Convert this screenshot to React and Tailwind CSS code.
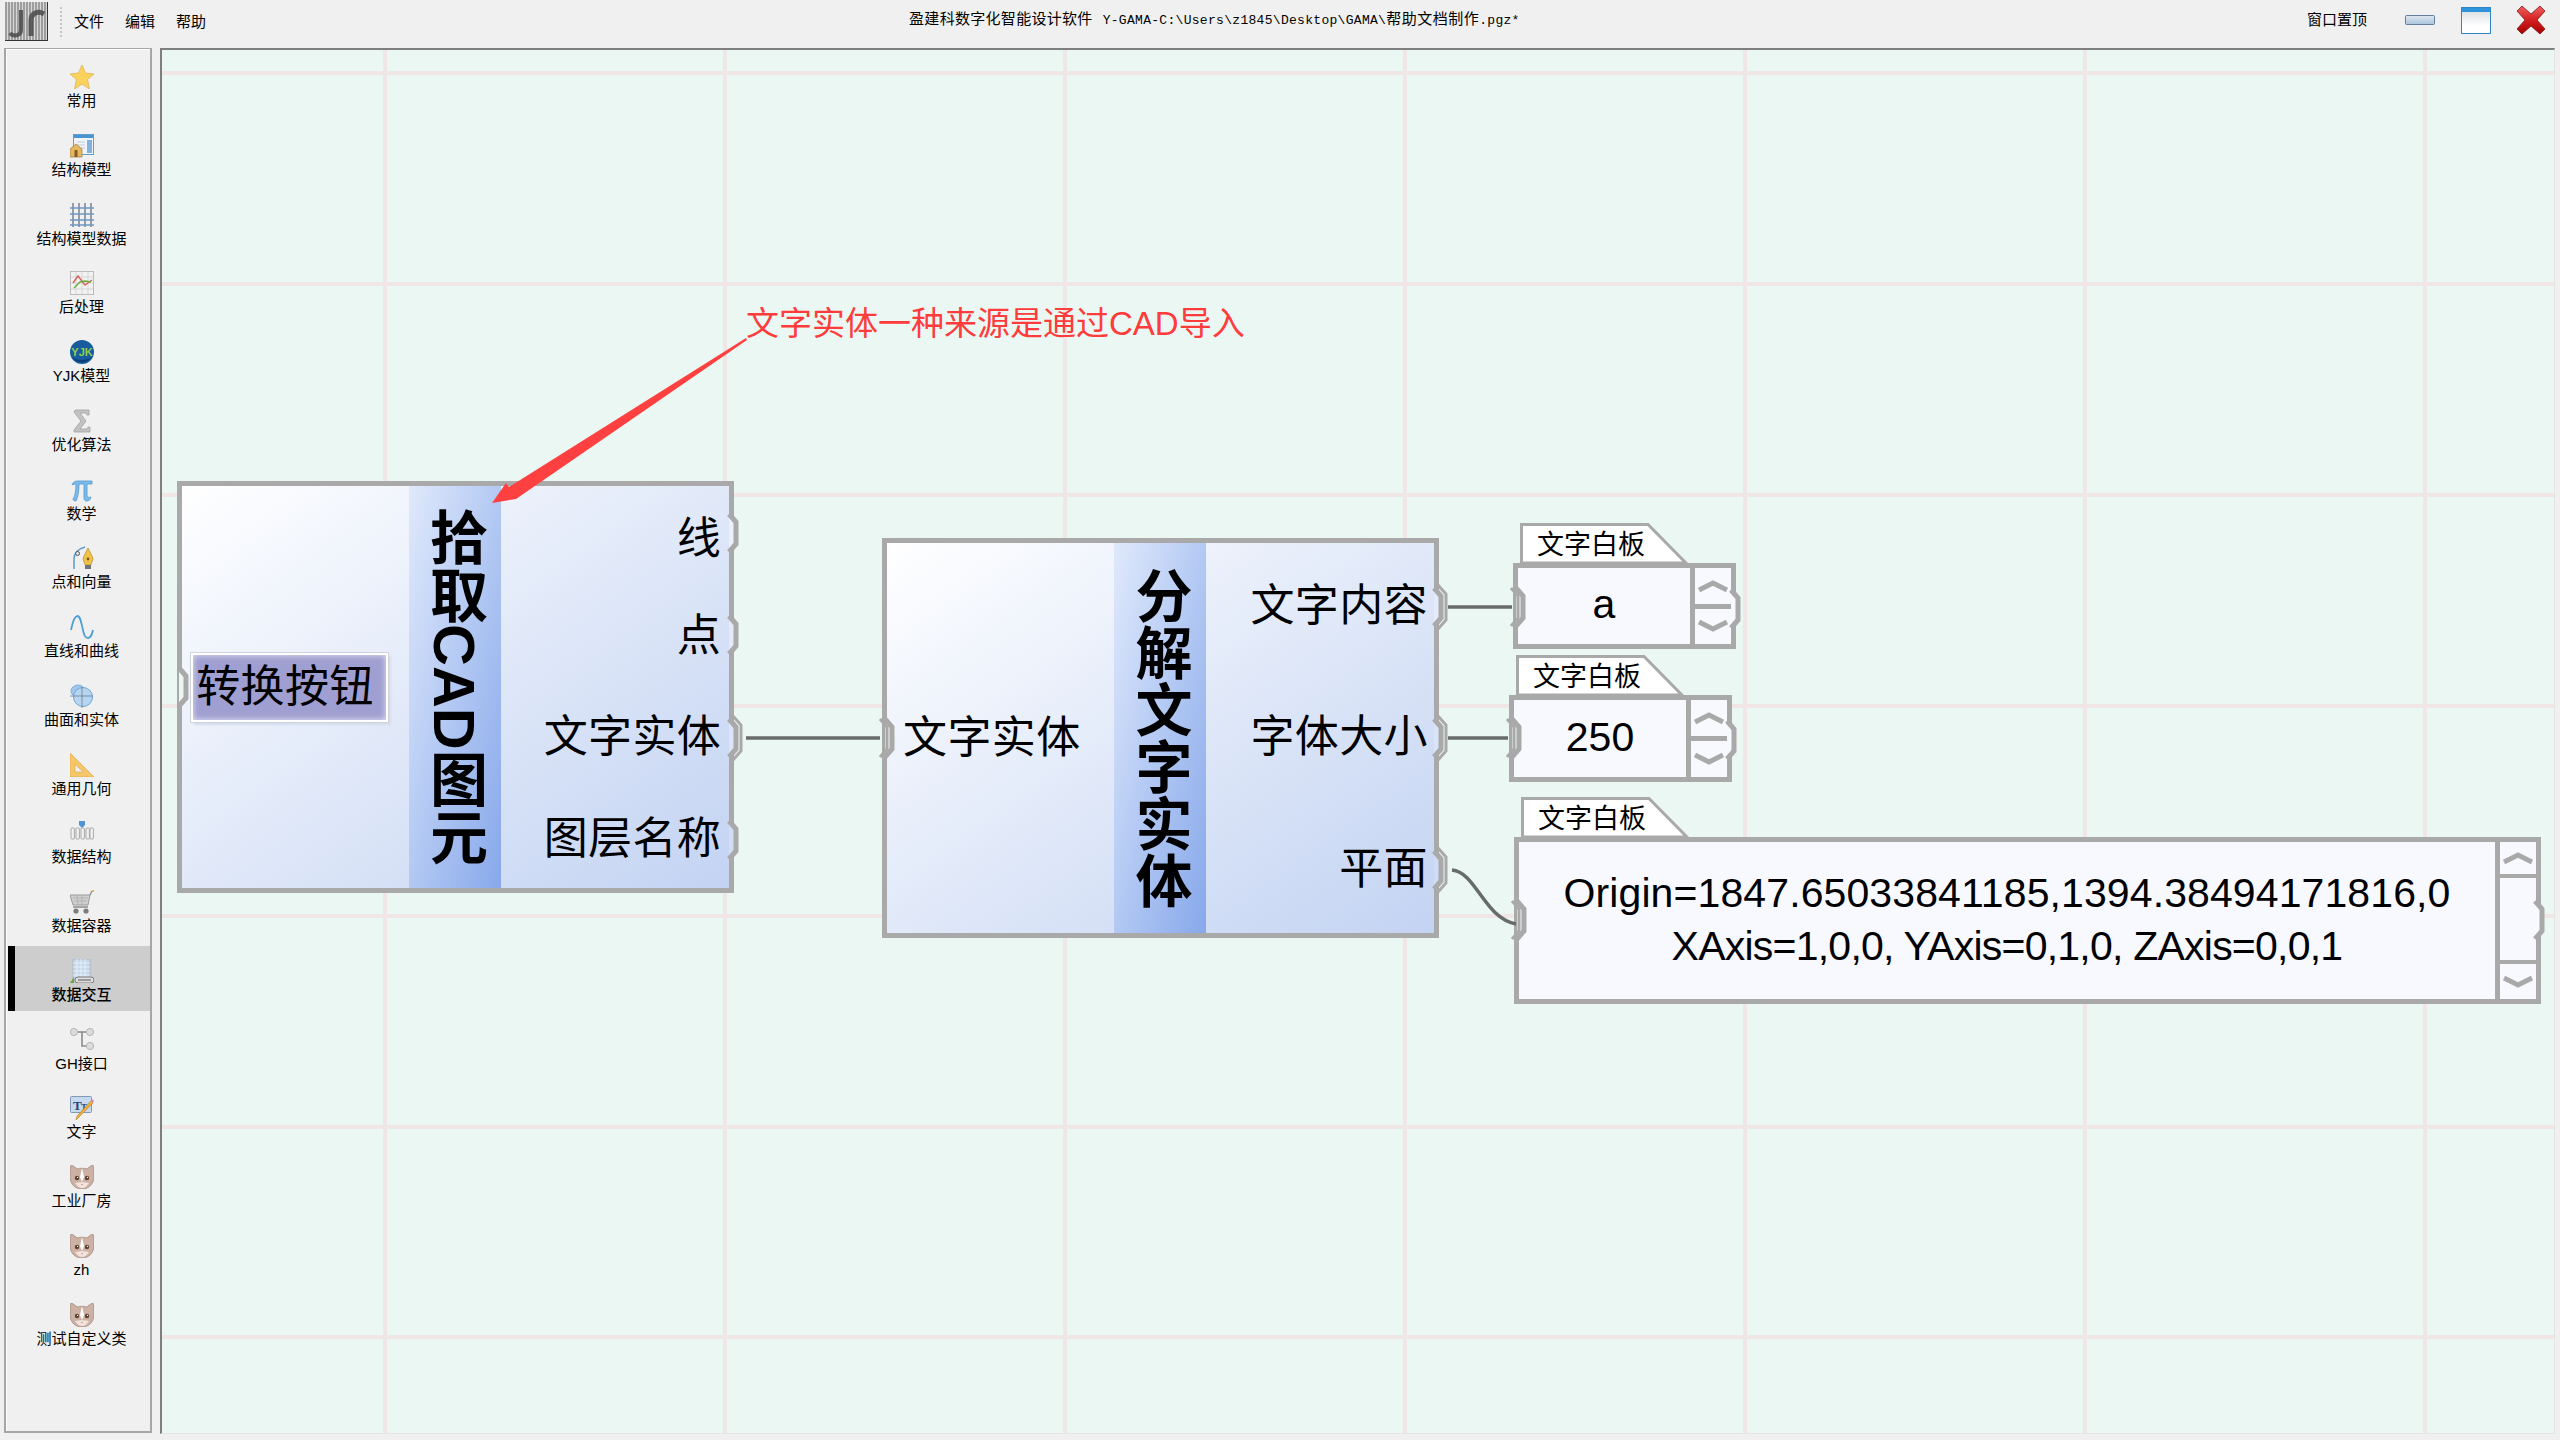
import React from "react";

const BORDER = "#a9a9a9";
const GRID_X = [385, 725, 1065, 1405, 1745, 2085, 2425];
const GRID_Y = [73, 284, 495, 706, 916, 1127, 1337];

const Star = () => (
  <polygon points="12,0 15.5,8 24,9 17.5,14.5 19.5,24 12,19 4.5,24 6.5,14.5 0,9 8.5,8" fill="#fbd25c" stroke="#e6bd63" strokeWidth="1" />
);

const ModelIcon = () => (
  <>
    <rect x="3.5" y="0.5" width="20" height="20" fill="#eef4fa" stroke="#5d9fd0" />
    <rect x="4" y="1" width="19" height="3" fill="#4a94cf" />
    <rect x="17" y="6" width="5" height="13" fill="#7fb2dc" />
    <path d="M7 8h8M7 11h8M7 14h8" stroke="#c5cbd2" />
    <path d="M0 15l6-5 6 5v8H0z" fill="#e5b75f" stroke="#9a7a48" strokeWidth="0.7" />
    <rect x="4.5" y="16" width="3" height="7" fill="#8a5a24" />
  </>
);

const GridIcon = () => (
  <>
    <path d="M3 0v24M9 0v24M15 0v24M21 0v24" stroke="#6f7a85" strokeWidth="1.4" />
    <path d="M0 5h24M0 11h24M0 17h24M0 22h24" stroke="#6f97c4" strokeWidth="1.6" />
  </>
);

const ChartIcon = () => (
  <>
    <rect x="0.5" y="0.5" width="23" height="23" fill="#f2f2f2" stroke="#bdbdbd" />
    <path d="M6 1v22M12 1v22M18 1v22M1 6h22M1 12h22M1 18h22" stroke="#d6d6d6" />
    <path d="M3 12L8 5l7 9 7-5" fill="none" stroke="#d9625a" strokeWidth="1.4" />
    <path d="M4 17l6-6 5-1 6 1" fill="none" stroke="#6cab3e" strokeWidth="1.4" />
  </>
);

const YjkIcon = () => (
  <>
    <circle cx="12" cy="12" r="12" fill="#175c9e" />
    <path d="M2 17a14 10 0 0 0 20 0 12 12 0 0 1-20 0z" fill="#0c3f78" />
    <text x="12" y="15.5" textAnchor="middle" fontSize="11" fontWeight="700" fill="#8fd04a" fontFamily="Liberation Sans">YJK</text>
  </>
);

const SigmaIcon = () => (
  <path d="M5 1h14v5h-2l-1-2H10l6 8-6 8h7l1-2h2v5H4v-2l7-9-7-9z" fill="#c2c2c2" stroke="#a2a2a2" strokeWidth="0.8" />
);

const PiIcon = () => (
  <path d="M2 7c1-3 3-4 6-4h14v3h-5v11c0 2 1 3 4 2-1 3-2 4-4 4-3 0-3-2-3-5V6H9c0 7-1 13-3 17-2 0-3-1-3-2 2-3 3-8 3-15-1 0-3 0-4 1z" fill="#7dbcea" stroke="#4f97cf" strokeWidth="0.8" />
);

const PenIcon = () => (
  <>
    <path d="M4 23V13C4 7 8 3 15 1" fill="none" stroke="#5d9ac8" strokeWidth="1.5" />
    <circle cx="7.5" cy="7.5" r="2" fill="#d8e4ef" stroke="#555" />
    <path d="M18 2l5 10c0 3-2 5-2 7h-6c0-2-2-4-2-7z" fill="#f1c24a" stroke="#b58a2b" strokeWidth="0.7" />
    <circle cx="18" cy="13" r="1.4" fill="#7a5a18" />
    <rect x="15" y="19" width="6" height="4" fill="#70757a" />
  </>
);

const SineIcon = () => (
  <path d="M1 15C3 5 5 1 7.5 1S11 6 12.5 13 15 23 18 23s4-4 5-8" fill="none" stroke="#4f9fd6" strokeWidth="1.8" />
);

const SolidIcon = () => (
  <>
    <ellipse cx="8" cy="7" rx="7" ry="6" fill="#9fc8ec" stroke="#7aaedb" />
    <circle cx="13" cy="13" r="9.5" fill="#b6d5f1" stroke="#6ea6d6" />
    <path d="M0 12h23M12 3v21" stroke="#6d7f8f" strokeWidth="0.8" />
  </>
);

const RulerIcon = () => (
  <path fillRule="evenodd" d="M0 0l24 24H0zM5 11v8h8z" fill="#f5c76a" stroke="#dca948" strokeWidth="0.7" />
);

const StructIcon = () => (
  <>
    <path d="M9 0h6v4l-3 3-3-3z" fill="#4f94d8" />
    {[1, 6, 11, 16, 20].map((x) => (
      <rect key={x} x={x} y="7" width="3.4" height="11" rx="1" fill="#f2f2f2" stroke="#a8a8a8" />
    ))}
  </>
);

const CartIcon = () => (
  <>
    <path d="M0 5h20l-2 10H3z" fill="#cfcfcf" stroke="#9a9a9a" />
    <path d="M3 8h15M4 11h13M7 5l1 10M12 5v10" stroke="#a9a9a9" strokeWidth="0.7" />
    <path d="M20 5l2-4M3 17h15" stroke="#8a8a8a" strokeWidth="1.3" />
    <circle cx="23" cy="1" r="1" fill="#e2a13c" />
    <circle cx="6" cy="21" r="2.6" fill="#7d7d7d" />
    <circle cx="16" cy="21" r="2.6" fill="#7d7d7d" />
  </>
);

const BuildingIcon = () => (
  <>
    <rect x="3" y="0" width="17" height="20" fill="#c6d8ea" stroke="#a1b4c6" strokeWidth="0.8" />
    <path d="M7 0v20M11 0v20M15 0v20M3 4h17M3 8h17M3 12h17M3 16h17" stroke="#eef4fa" strokeWidth="0.8" />
    <path d="M0 24l4-6v6z" fill="#6aa53a" />
    <rect x="5" y="18" width="19" height="6" rx="3" fill="#dedede" stroke="#7c7c7c" />
    <path d="M8 21h13" stroke="#555" />
  </>
);

const TreeIcon = () => (
  <>
    <path d="M4 4h16M12 4v14h8" fill="none" stroke="#8a8a8a" strokeWidth="1.6" />
    <circle cx="4" cy="4" r="3.6" fill="#dcdcdc" stroke="#b5b5b5" />
    <circle cx="20" cy="4" r="3.6" fill="#dcdcdc" stroke="#b5b5b5" />
    <circle cx="20" cy="18" r="3.6" fill="#dcdcdc" stroke="#b5b5b5" />
  </>
);

const TextIcon = () => (
  <>
    <rect x="0.5" y="0.5" width="21" height="16" rx="1" fill="#c7d9ee" stroke="#7f99b8" />
    <text x="3" y="14" fontSize="13" fontWeight="700" fill="#25466e" fontFamily="Liberation Serif">T</text>
    <text x="11" y="14" fontSize="9" fontWeight="700" fill="#25466e" fontFamily="Liberation Serif">T</text>
    <path d="M23 7l-15 15-2 2 1-4L21 5z" fill="#f2ae3d" stroke="#b47d25" strokeWidth="0.6" />
    <path d="M21 5l2 2 1-2-1-2z" fill="#dd8fc0" />
  </>
);

const CatIcon = () => (
  <>
    <path d="M1 0c3 1 5 3 6 4 3-1 7-1 10 0 1-1 3-3 6-4 1 4 1 8 1 11 0 8-5 13-12 13S0 19 0 11C0 8 0 4 1 0z" fill="#cdb1a4" stroke="#9a8278" strokeWidth="0.7" />
    <path d="M12 3l2 9-2 5-2-5z" fill="#fff" />
    <path d="M5 18c2 3 4 5 7 5s5-2 7-5c-4-1-10-1-14 0z" fill="#f1e3dc" />
    <circle cx="7" cy="13" r="2.2" fill="#5a4030" />
    <circle cx="17" cy="13" r="2.2" fill="#5a4030" />
    <circle cx="7.5" cy="12.4" r="0.7" fill="#fff" />
    <circle cx="17.5" cy="12.4" r="0.7" fill="#fff" />
    <path d="M11 19h2l-1 1z" fill="#a56f60" />
  </>
);

const toolItems = [
  { name: "常用", icon: Star },
  { name: "结构模型", icon: ModelIcon },
  { name: "结构模型数据", icon: GridIcon },
  { name: "后处理", icon: ChartIcon },
  { name: "YJK模型", icon: YjkIcon },
  { name: "优化算法", icon: SigmaIcon },
  { name: "数学", icon: PiIcon },
  { name: "点和向量", icon: PenIcon },
  { name: "直线和曲线", icon: SineIcon },
  { name: "曲面和实体", icon: SolidIcon },
  { name: "通用几何", icon: RulerIcon },
  { name: "数据结构", icon: StructIcon },
  { name: "数据容器", icon: CartIcon },
  { name: "数据交互", icon: BuildingIcon, active: true },
  { name: "GH接口", icon: TreeIcon },
  { name: "文字", icon: TextIcon },
  { name: "工业厂房", icon: CatIcon },
  { name: "zh", icon: CatIcon },
  { name: "测试自定义类", icon: CatIcon },
];

const Logo = () => (
  <svg width="43" height="39" viewBox="0 0 43 39">
    <rect width="43" height="39" fill="#d8d8d8" />
    {[1, 4, 7, 10, 13, 16, 19, 22, 25, 28, 31, 34, 37, 40].map((x) => (
      <path key={x} d="M0 0v38" transform={`translate(${x} 0)`} stroke="#777" strokeWidth="1.2" />
    ))}
    <path d="M16 8v20c0 6-8 7-11 3" fill="none" stroke="#4a4a4a" strokeWidth="4" opacity="0.85" />
    <path d="M26 34V18c0-6 6-10 13-6" fill="none" stroke="#4a4a4a" strokeWidth="5" opacity="0.85" />
    <path d="M0 38.5h43M42.5 0v39" stroke="#333" />
  </svg>
);

const TitleBar = () => (
  <header className="h-12 flex items-center relative">
    <div className="ml-[5px] mb-[5px]"><Logo /></div>
    <div className="ml-[12px] mb-[5px] h-[30px] border-l-2 border-dotted border-[#c4c4c4]" />
    <nav className="ml-[12px] flex gap-[21px] text-[15px] text-black mb-[3px]">
      <span>文件</span>
      <span>编辑</span>
      <span>帮助</span>
    </nav>
    <div className="ml-[703px] mb-[10px] text-[15px] text-black whitespace-nowrap flex items-baseline">
      <span className="tracking-[0.3px]">盈建科数字化智能设计软件</span>
      <span className="ml-[10px] text-[13px] tracking-[0.3px] [font-family:'Liberation_Mono',monospace]">Y-GAMA-C:\Users\z1845\Desktop\GAMA\</span>
      <span className="tracking-[0.5px]">帮助文档制作</span>
      <span className="text-[13px] tracking-[0.3px] [font-family:'Liberation_Mono',monospace]">.pgz*</span>
    </div>
    <div className="ml-auto flex items-center mb-[8px]">
      <span className="text-[15px] text-black">窗口置顶</span>
      <svg className="ml-[38px]" width="30" height="10" viewBox="0 0 30 10">
        <defs>
          <linearGradient id="minFill" x1="0" y1="0" x2="0" y2="1">
            <stop offset="0" stopColor="#dfe8f2" />
            <stop offset="1" stopColor="#a9c3dc" />
          </linearGradient>
        </defs>
        <rect x="0.5" y="0.5" width="29" height="9" rx="1" fill="url(#minFill)" stroke="#5f7f9f" />
      </svg>
      <svg className="ml-[26px]" width="30" height="27" viewBox="0 0 30 27">
        <defs>
          <linearGradient id="maxFill" x1="0" y1="0" x2="0" y2="1">
            <stop offset="0" stopColor="#d5d9dc" />
            <stop offset="0.7" stopColor="#ffffff" />
          </linearGradient>
        </defs>
        <rect x="0.5" y="0.5" width="29" height="26" fill="url(#maxFill)" stroke="#2f86c5" />
        <rect x="1" y="1" width="28" height="4" fill="#2f94dc" />
      </svg>
      <svg className="ml-[25px] mr-[14px]" width="30" height="30" viewBox="0 0 30 30">
        <defs>
          <linearGradient id="closeFill" x1="0" y1="0" x2="0" y2="1">
            <stop offset="0" stopColor="#f06060" />
            <stop offset="0.5" stopColor="#d42020" />
            <stop offset="1" stopColor="#a80000" />
          </linearGradient>
        </defs>
        <path d="M6 1l9 8 9-8 5 5-8 9 8 9-5 5-9-8-9 8-5-5 8-9-8-9z" fill="url(#closeFill)" stroke="#7c1a1a" strokeWidth="0.8" />
      </svg>
    </div>
  </header>
);

const Sidebar = () => (
  <aside className="w-[148px] h-[1385px] border-t border-b-2 border-x-2 border-[#a6a6a6] shadow-[inset_1px_1px_0_#fff] pl-[2px] pt-[3px]">
    {toolItems.map((item) => {
      const Icon = item.icon;
      return (
        <div key={item.name} className="h-[68.78px]">
          <div className={`h-[65px] flex flex-col items-center pt-[13px] border-l-[7px] ${item.active ? "bg-[#cdcdcd] border-black" : "border-transparent"}`}>
            <svg className="w-6 h-6 shrink-0 -ml-[2px]" viewBox="0 0 24 24">
              <Icon />
            </svg>
            <span className={`-ml-[2px] mt-[4px] text-[15px] leading-[16px] whitespace-nowrap text-black ${item.active ? "font-medium" : ""}`}>
              {item.name}
            </span>
          </div>
        </div>
      );
    })}
  </aside>
);

const VerticalTitle = ({ children, size }) => (
  <div className="w-[92px] flex items-center justify-center bg-linear-to-br from-[#e0e9fb] to-[#87a8ea]">
    <span className={`[writing-mode:vertical-rl] ${size} leading-none font-bold text-black whitespace-nowrap`}>
      {children}
    </span>
  </div>
);

const Chevron = ({ down }) => (
  <svg width="30" height="14" viewBox="0 0 30 14">
    <polyline points={down ? "1,3 15,10 29,3" : "1,11 15,4 29,11"} fill="none" stroke={BORDER} strokeWidth="5" />
  </svg>
);

const PanelTab = () => (
  <div className="absolute left-[2px] -top-[45px] w-[168px] h-[40px]">
    <svg className="absolute inset-0" width="168" height="40" viewBox="0 0 168 40">
      <polygon points="1.5,40 1.5,1.5 128,1.5 166,40" fill="#fff" stroke={BORDER} strokeWidth="3" />
    </svg>
    <span className="absolute left-[17px] top-[4px] text-[27px] leading-[36px] text-black">文字白板</span>
  </div>
);

// small panel with a value and up / down buttons
const ValuePanel = ({ className, children }) => (
  <div className={`absolute border-[5px] border-[#a9a9a9] bg-[#f8f9ff] flex ${className}`}>
    <PanelTab />
    <div className="flex-1 flex items-center justify-center pb-[2px] text-[41px] text-black">{children}</div>
    <div className="w-[41px] border-l-[5px] border-[#a9a9a9] flex flex-col">
      <div className="flex-1 flex items-center justify-center border-b-[5px] border-[#a9a9a9]"><Chevron /></div>
      <div className="flex-1 flex items-center justify-center"><Chevron down /></div>
    </div>
  </div>
);

const OriginPanel = () => (
  <div className="absolute left-[1352px] top-[787px] w-[1027px] h-[167px] border-[5px] border-[#a9a9a9] bg-[#f8f9ff] flex">
    <PanelTab />
    <div className="flex-1 flex flex-col items-center justify-center pb-[2px] text-[41px] leading-[53px] text-black whitespace-nowrap">
      <span className="tracking-[0.1px]">Origin=1847.65033841185,1394.38494171816,0</span>
      <span className="tracking-[-0.77px]">XAxis=1,0,0, YAxis=0,1,0, ZAxis=0,0,1</span>
    </div>
    <div className="w-[41px] border-l-[5px] border-[#a9a9a9] flex flex-col">
      <div className="h-[36px] flex items-center justify-center border-b-[4px] border-[#a9a9a9]"><Chevron /></div>
      <div className="flex-1 border-b-[4px] border-[#a9a9a9]" />
      <div className="h-[35px] flex items-center justify-center"><Chevron down /></div>
    </div>
  </div>
);

const OutPort = ({ x, y, fill, linked }) => (
  <g fill="none">
    <path d={`M${x - 3} ${y - 19}L${x + 4} ${y - 11}V${y + 11}L${x - 3} ${y + 19}z`} fill={fill} stroke="none" />
    <path d={`M${x - 3} ${y - 19}L${x + 4} ${y - 11}V${y + 11}L${x - 3} ${y + 19}`} stroke={BORDER} strokeWidth="5" />
    {linked && (
      <path d={`M${x + 1} ${y - 22}L${x + 9} ${y - 13}V${y + 13}L${x + 1} ${y + 22}`} stroke={BORDER} strokeWidth="3" />
    )}
  </g>
);

const InPort = ({ x, y, fill, linked }) => (
  <g fill="none">
    <path d={`M${x} ${y - 19}L${x + 7} ${y - 11}V${y + 11}L${x} ${y + 19}z`} fill={fill} stroke="none" />
    <path d={`M${x} ${y - 19}L${x + 7} ${y - 11}V${y + 11}L${x} ${y + 19}`} stroke={BORDER} strokeWidth="5" />
    {linked && (
      <path d={`M${x - 5} ${y - 19}L${x + 2} ${y - 11}V${y + 11}L${x - 5} ${y + 19}`} stroke={BORDER} strokeWidth="3" />
    )}
  </g>
);

// wires, ports and the red note arrow, in page coordinates
const Overlay = () => (
  <svg className="absolute inset-0 pointer-events-none" width="2393" height="1384" viewBox="162 50 2393 1384">
    <g fill="none" stroke="#686b6b" strokeWidth="3.5">
      <path d="M746 738H880" />
      <path d="M1448 607H1512" />
      <path d="M1448 738H1508" />
      <path d="M1452 870C1476 872 1484 918 1516 924" />
    </g>
    <InPort x={179} y={687} fill="#ebf7f3" />
    <OutPort x={732} y={533} fill="#ebf0fb" />
    <OutPort x={732} y={635} fill="#e3eafa" />
    <OutPort x={732} y={738} fill="#dbe4f8" linked />
    <OutPort x={732} y={840} fill="#d3def6" />
    <InPort x={885} y={738} fill="#ebf7f3" linked />
    <OutPort x={1437} y={607} fill="#e4ebfa" linked />
    <OutPort x={1437} y={738} fill="#dae4f8" linked />
    <OutPort x={1437} y={870} fill="#d0dcf6" linked />
    <InPort x={1516} y={607} fill="#ebf7f3" linked />
    <InPort x={1512} y={738} fill="#ebf7f3" linked />
    <InPort x={1517} y={920} fill="#ebf7f3" linked />
    <OutPort x={1734} y={609} fill="#f8f9ff" />
    <OutPort x={1730} y={740} fill="#f8f9ff" />
    <OutPort x={2538} y={920} fill="#f8f9ff" />
    <polygon points="746,338 747,340 516,499 492,503 506,483 509,487" fill="#ff4040" />
  </svg>
);

const Canvas = () => (
  <main className="relative ml-[8px] w-[2395px] h-[1386px] border-t-2 border-l-2 border-t-[#7f7f7f] border-l-[#7f7f7f] border-r border-b border-r-[#e4e4e4] border-b-[#e4e4e4] bg-[#ebf7f3] overflow-hidden">
    <svg className="absolute inset-0" width="2393" height="1384" viewBox="162 50 2393 1384">
      {GRID_X.map((x) => (
        <line key={x} x1={x} x2={x} y1="50" y2="1434" stroke="#f0e6e6" strokeWidth="4" />
      ))}
      {GRID_Y.map((y) => (
        <line key={y} x1="162" x2="2555" y1={y} y2={y} stroke="#f0e6e6" strokeWidth="4" />
      ))}
    </svg>

    <div className="absolute left-[15px] top-[431px] w-[557px] h-[412px] border-[5px] border-[#a9a9a9] bg-linear-to-br from-white to-[#c3d3f2] flex">
      <div className="w-[227px] flex items-center pl-[9px]">
        <div className="w-[197px] h-[69px] border-2 border-white outline outline-[#cfd3dc] bg-[#9f9fd1] shadow-[inset_0_0_6px_#e8e8f4,3px_3px_2px_#d5dcec] flex items-center justify-center pr-[9px] text-[44px] tracking-[0.4px] text-black whitespace-nowrap">
          转换按钮
        </div>
      </div>
      <VerticalTitle size="text-[58px] mr-[2px]">拾取CAD图元</VerticalTitle>
      <div className="flex-1 flex flex-col justify-around items-end pr-2 pt-[6px] text-[44px] tracking-[0.3px] leading-none text-black">
        <span className="-mt-[2px]">线</span>
        <span>点</span>
        <span className="mt-[3px]">文字实体</span>
        <span className="mt-[5px]">图层名称</span>
      </div>
    </div>

    <div className="absolute left-[720px] top-[488px] w-[557px] h-[400px] border-[5px] border-[#a9a9a9] bg-linear-to-br from-white to-[#c3d3f2] flex">
      <div className="w-[227px] flex items-center pl-[16px] text-[44px] tracking-[0.4px] text-black whitespace-nowrap">文字实体</div>
      <VerticalTitle size="text-[57px] mr-[3px]">分解文字实体</VerticalTitle>
      <div className="flex-1 flex flex-col justify-around items-end pr-[6px] text-[44px] tracking-[0.4px] leading-none text-black">
        <span className="-mt-[2px]">文字内容</span>
        <span className="mt-[2px]">字体大小</span>
        <span className="mt-[3px]">平面</span>
      </div>
    </div>

    <ValuePanel className="left-[1351px] top-[513px] w-[223px] h-[86px]">a</ValuePanel>
    <ValuePanel className="left-[1347px] top-[645px] w-[223px] h-[87px]">250</ValuePanel>
    <OriginPanel />

    <div className="absolute left-[584px] top-[254px] text-[33px] leading-10 text-[#ff3b3b] whitespace-nowrap">
      文字实体一种来源是通过CAD导入
    </div>
    <Overlay />
  </main>
);

const App = () => (
  <div className="w-[2560px] h-[1440px] bg-[#f0f0f0] overflow-hidden [font-family:'Liberation_Sans','Noto_Sans_CJK_SC',sans-serif]">
    <TitleBar />
    <div className="flex pl-[4px]">
      <Sidebar />
      <Canvas />
    </div>
  </div>
);

export default App;
